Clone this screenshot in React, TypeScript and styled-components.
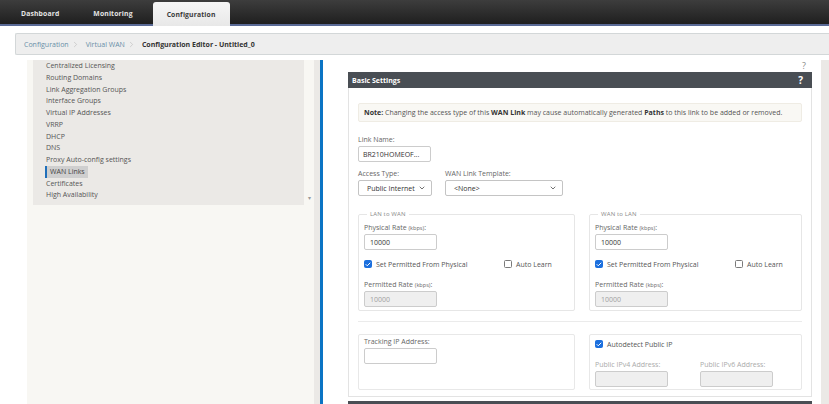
import React from 'react';
import styled, { createGlobalStyle } from 'styled-components';
import { ChevronRight, ChevronDown, Check } from 'lucide-react';

const GlobalStyle = createGlobalStyle`
  html, body {
    margin: 0;
    padding: 0;
    background: #ffffff;
  }
  body {
    font-family: 'Open Sans', 'Noto Sans', sans-serif;
    font-size: 7px;
    color: #555;
  }
  * {
    box-sizing: border-box;
  }
`;

const navItems = [
  'Centralized Licensing',
  'Routing Domains',
  'Link Aggregation Groups',
  'Interface Groups',
  'Virtual IP Addresses',
  'VRRP',
  'DHCP',
  'DNS',
  'Proxy Auto-config settings',
  'WAN Links',
  'Certificates',
  'High Availability',
];

function CheckBox({ checked }: { checked?: boolean }) {
  return (
    <Box $checked={checked}>
      {checked && <Check size={7} strokeWidth={4} color="#fff" />}
    </Box>
  );
}

function RateBlock({ legend }: { legend: string }) {
  return (
    <Fieldset>
      <Legend>{legend}</Legend>
      <FieldLabel $top={5}>
        Physical Rate <Small>(kbps)</Small>:
      </FieldLabel>
      <TextInput readOnly value="10000" />
      <CheckGrid>
        <CheckLabel>
          <CheckBox checked />
          Set Permitted From Physical
        </CheckLabel>
        <CheckLabel>
          <CheckBox />
          Auto Learn
        </CheckLabel>
      </CheckGrid>
      <FieldLabel $top={11}>
        Permitted Rate <Small>(kbps)</Small>:
      </FieldLabel>
      <TextInput readOnly value="10000" $disabled />
    </Fieldset>
  );
}

export default function App() {
  return (
    <Page>
      <GlobalStyle />
      <TopBar>
        <Tab>Dashboard</Tab>
        <Tab>Monitoring</Tab>
        <Tab $active>Configuration</Tab>
      </TopBar>

      <Breadcrumb>
        <Crumb>Configuration</Crumb>
        <Sep>
          <ChevronRight size={9} color="#b5b5b5" strokeWidth={1.5} />
        </Sep>
        <Crumb>Virtual WAN</Crumb>
        <Sep>
          <ChevronRight size={9} color="#b5b5b5" strokeWidth={1.5} />
        </Sep>
        <Crumb $current>Configuration Editor - Untitled_0</Crumb>
      </Breadcrumb>

      <Body>
        <Sidebar>
          <SideInner>
            <NavArea>
              <NavList>
                {navItems.map((item) => (
                  <NavItem key={item}>
                    {item === 'WAN Links' ? <Selected>{item}</Selected> : item}
                  </NavItem>
                ))}
              </NavList>
              <ScrollCol>▾</ScrollCol>
            </NavArea>
          </SideInner>
        </Sidebar>

        <Content>
          <Main>
            <HelpTop>?</HelpTop>
            <Panel>
              <PanelHeader>
                <span>Basic Settings</span>
                <HeaderHelp>?</HeaderHelp>
              </PanelHeader>
              <PanelBody>
                <Note>
                  <b>Note:</b>&nbsp;Changing the access type of this&nbsp;
                  <b>WAN Link</b>&nbsp;may cause automatically generated&nbsp;
                  <b>Paths</b>&nbsp;to this link to be added or removed.
                </Note>

                <FieldLabel $top={13}>Link Name:</FieldLabel>
                <TextInput readOnly value="BR210HOMEOF..." $pad={4} />

                <SelectRow>
                  <div>
                    <FieldLabel>Access Type:</FieldLabel>
                    <SelectBox $width={74}>
                      Public Internet
                      <ChevronDown size={8} strokeWidth={2.5} color="#555" />
                    </SelectBox>
                  </div>
                  <div>
                    <FieldLabel>WAN Link Template:</FieldLabel>
                    <SelectBox $width={118}>
                      &lt;None&gt;
                      <ChevronDown size={8} strokeWidth={2.5} color="#555" />
                    </SelectBox>
                  </div>
                </SelectRow>

                <TwoCols $top={14}>
                  <RateBlock legend="LAN to WAN" />
                  <RateBlock legend="WAN to LAN" />
                </TwoCols>

                <Separator />

                <TwoCols $top={12}>
                  <Card>
                    <FieldLabel $top={2}>Tracking IP Address:</FieldLabel>
                    <TextInput readOnly value="" />
                  </Card>
                  <Card>
                    <CheckLabel $top={4}>
                      <CheckBox checked />
                      Autodetect Public IP
                    </CheckLabel>
                    <AddressGrid>
                      <div>
                        <FieldLabel $muted>Public IPv4 Address:</FieldLabel>
                        <TextInput readOnly value="" $disabled />
                      </div>
                      <div>
                        <FieldLabel $muted>Public IPv6 Address:</FieldLabel>
                        <TextInput readOnly value="" $disabled />
                      </div>
                    </AddressGrid>
                  </Card>
                </TwoCols>
              </PanelBody>
              <NextHeader />
            </Panel>
          </Main>
          <RightStrip />
        </Content>
      </Body>
    </Page>
  );
}

const Page = styled.div`
  width: 829px;
  height: 404px;
  overflow: hidden;
  display: flex;
  flex-direction: column;
`;

const TopBar = styled.div`
  height: 26px;
  flex-shrink: 0;
  display: flex;
  align-items: flex-end;
  gap: 6px;
  padding-left: 7px;
  background: linear-gradient(#3d3d3d, #1f1f1f);
  border-bottom: 2px solid #5a6a96;
`;

const Tab = styled.div<{ $active?: boolean }>`
  height: ${(p) => (p.$active ? '24px' : '22px')};
  margin-bottom: ${(p) => (p.$active ? '-2px' : '0')};
  padding: 0 14px;
  display: flex;
  align-items: center;
  font-size: 6.8px;
  font-weight: 700;
  letter-spacing: 0.15px;
  color: ${(p) => (p.$active ? '#3a3a3a' : '#e4e4e4')};
  background: ${(p) =>
    p.$active ? 'linear-gradient(#f6f6f6, #e8e8e8)' : 'transparent'};
  border-radius: 3px 3px 0 0;
`;

const Breadcrumb = styled.div`
  margin: 7px 0 0 15px;
  height: 22px;
  flex-shrink: 0;
  display: flex;
  align-items: center;
  padding-left: 8px;
  background: #eeeeee;
  border: 1px solid #d3d7d8;
  border-right: none;
  border-radius: 2px 0 0 2px;
`;

const Crumb = styled.span<{ $current?: boolean }>`
  font-size: 7px;
  color: ${(p) => (p.$current ? '#333' : '#6a8ea8')};
  font-weight: ${(p) => (p.$current ? 700 : 400)};
`;

const Sep = styled.span`
  display: flex;
  margin: 0 6px 0 2px;
`;

const Body = styled.div`
  flex: 1;
  min-height: 0;
  margin-top: 5px;
  display: flex;
`;

const Sidebar = styled.div`
  margin-left: 27px;
  width: 293px;
  padding-right: 6px;
  background: #ebe9e6;
  display: flex;
`;

const SideInner = styled.div`
  flex: 1;
  background: #f8f7f3;
  padding-left: 6px;
`;

const NavArea = styled.div`
  display: flex;
`;

const NavList = styled.div`
  width: 271px;
  background: #ebe9e6;
  padding: 0 0 4px 13px;
`;

const NavItem = styled.div`
  height: 11.75px;
  line-height: 11.75px;
  font-size: 7px;
  color: #555;
  white-space: nowrap;
`;

const Selected = styled.span`
  display: inline-block;
  margin-left: -1px;
  padding: 0 3px;
  border-left: 2px solid #1f6fba;
  background: #cfcfcf;
  color: #444;
`;

const ScrollCol = styled.div`
  width: 10px;
  display: flex;
  align-items: flex-end;
  justify-content: center;
  padding-bottom: 3px;
  font-size: 6px;
  color: #9a9a9a;
`;

const Content = styled.div`
  flex: 1;
  display: flex;
  border-left: 3px solid #0b74c4;
`;

const Main = styled.div`
  flex: 1;
  padding: 0 9px 0 25px;
  display: flex;
  flex-direction: column;
`;

const RightStrip = styled.div`
  width: 8px;
  background: #ebe9e6;
`;

const HelpTop = styled.div`
  height: 12px;
  line-height: 12px;
  text-align: right;
  padding-right: 6px;
  font-size: 9px;
  color: #8a8a8a;
`;

const Panel = styled.div`
  display: flex;
  flex-direction: column;
`;

const PanelHeader = styled.div`
  height: 16px;
  display: flex;
  align-items: center;
  justify-content: space-between;
  padding: 0 9px 0 4px;
  background: #494e54;
  color: #ffffff;
  font-size: 7px;
  font-weight: 700;
`;

const HeaderHelp = styled.span`
  font-size: 10px;
  font-weight: 700;
`;

const PanelBody = styled.div`
  border: 1px solid #e3e3e3;
  border-top: none;
  padding: 15px 9px 6px;
`;

const Note = styled.div`
  height: 19px;
  display: flex;
  align-items: center;
  padding-left: 5px;
  background: #f9f8f4;
  border: 1px solid #efece4;
  border-radius: 2px;
  font-size: 7px;
  color: #555;
  white-space: nowrap;

  b {
    color: #333;
  }
`;

const FieldLabel = styled.label<{ $top?: number; $muted?: boolean }>`
  display: block;
  margin-top: ${(p) => p.$top ?? 0}px;
  margin-bottom: 1px;
  line-height: 10px;
  font-size: 7px;
  color: ${(p) => (p.$muted ? '#aaa' : '#666')};
  white-space: nowrap;
`;

const Small = styled.span`
  font-size: 5.6px;
`;

const TextInput = styled.input<{ $disabled?: boolean; $pad?: number }>`
  display: block;
  width: 73px;
  height: 16px;
  margin: 0;
  padding: 0 ${(p) => p.$pad ?? 5}px;
  border: 1px solid #cccccc;
  border-radius: 2px;
  outline: none;
  font-family: 'Open Sans', 'Noto Sans', sans-serif;
  font-size: 7px;
  color: ${(p) => (p.$disabled ? '#a0a0a0' : '#333')};
  background: ${(p) => (p.$disabled ? '#efefef' : '#fff')};
`;

const SelectRow = styled.div`
  margin-top: 7px;
  display: flex;
  gap: 13px;
`;

const SelectBox = styled.div<{ $width: number }>`
  width: ${(p) => p.$width}px;
  height: 16px;
  display: flex;
  align-items: center;
  justify-content: space-between;
  padding: 0 5px 0 8px;
  border: 1px solid #c4c4c4;
  border-radius: 2px;
  color: #333;
  font-size: 7px;
`;

const TwoCols = styled.div<{ $top: number }>`
  margin-top: ${(p) => p.$top}px;
  display: grid;
  grid-template-columns: 217px 213px;
  column-gap: 14px;
`;

const Fieldset = styled.fieldset`
  margin: 0;
  min-width: 0;
  padding: 0 5px 3px;
  border: 1px solid #e6e6e6;
  border-radius: 2px;
`;

const Legend = styled.legend`
  margin-left: 3px;
  padding: 0 3px;
  font-size: 6px;
  line-height: 8px;
  color: #8a8a8a;
  letter-spacing: 0.15px;
`;

const CheckGrid = styled.div`
  margin-top: 9px;
  display: grid;
  grid-template-columns: 140px auto;
`;

const CheckLabel = styled.div<{ $top?: number }>`
  margin-top: ${(p) => p.$top ?? 0}px;
  height: 10px;
  display: flex;
  align-items: center;
  gap: 4px;
  font-size: 7px;
  color: #555;
  white-space: nowrap;
`;

const Box = styled.span<{ $checked?: boolean }>`
  width: 8px;
  height: 8px;
  flex-shrink: 0;
  display: flex;
  align-items: center;
  justify-content: center;
  border-radius: 1.5px;
  background: ${(p) => (p.$checked ? '#1b6fde' : '#fff')};
  border: 1px solid ${(p) => (p.$checked ? '#1b6fde' : '#7a7a7a')};
`;

const Separator = styled.div`
  margin-top: 10px;
  border-top: 1px solid #ebebeb;
`;

const Card = styled.div`
  height: 56px;
  padding: 0 5px;
  border: 1px solid #e8e8e8;
  border-radius: 2px;
`;

const AddressGrid = styled.div`
  margin-top: 11px;
  display: grid;
  grid-template-columns: 105px auto;
`;

const NextHeader = styled.div`
  margin-top: 4px;
  height: 16px;
  background: #494e54;
`;
